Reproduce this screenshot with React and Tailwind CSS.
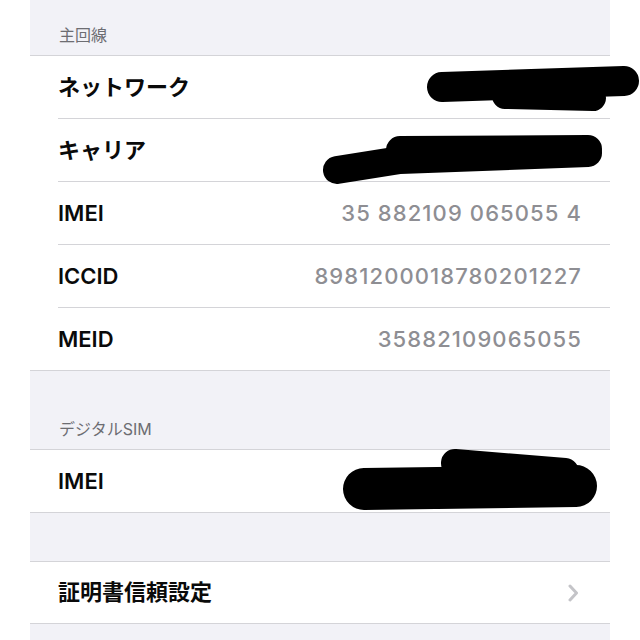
import React from "react";

const FONT = { fontFamily: 'Inter, "Noto Sans CJK JP", sans-serif' };

function Row({ label, value, last, chevron, h }) {
  return (
    <div className={"ml-[28px] pr-[29px] flex items-center justify-between " + (h || "h-[63px]") + " " + (last ? "" : "border-b border-[#d4d4d8]")}>
      <span className="text-[22px] font-semibold text-[#0a0a0a]">{label}</span>
      {value ? <span className="text-[22px] font-medium text-[#8e8e93] tracking-[1.1px] mr-[-1px]">{value}</span> : null}
      {chevron ? (
        <svg width="12" height="18" viewBox="0 0 12 18" className="mr-[2px]">
          <path d="M3 2 L9.5 9 L3 16" fill="none" stroke="#c4c4c8" strokeWidth="3" strokeLinecap="round" strokeLinejoin="round" />
        </svg>
      ) : null}
    </div>
  );
}

export default function App() {
  return (
    <div className="relative w-[640px] h-[640px] bg-white flex justify-center overflow-hidden" style={FONT}>
      <div className="w-[580px] h-full bg-[#f2f2f7]">
        <div className="h-[55px] flex items-end pb-[8px] pl-[29px] text-[16px] text-[#6d6d72]">主回線</div>
        <div className="bg-white border-t border-b border-[#d4d4d8]">
          <Row label="ネットワーク" />
          <Row label="キャリア" />
          <Row label="IMEI" value="35 882109 065055 4" />
          <Row label="ICCID" value="8981200018780201227" />
          <Row label="MEID" value="35882109065055" last h="h-[62px]" />
        </div>
        <div className="h-[78px] flex items-end pb-[8px] pl-[29px] text-[16px] text-[#6d6d72]">デジタルSIM</div>
        <div className="bg-white border-t border-b border-[#d4d4d8]">
          <Row label="IMEI" last h="h-[62px]" />
        </div>
        <div className="h-[48px]"></div>
        <div className="bg-white border-t border-b border-[#d4d4d8]">
          <Row label="証明書信頼設定" chevron last h="h-[61px]" />
        </div>
      </div>
      <svg className="absolute left-0 top-0 pointer-events-none" width="640" height="640" viewBox="0 0 640 640">
        <g stroke="#000" strokeLinecap="round" strokeLinejoin="round" fill="none">
          <path d="M442 87 L624 81" strokeWidth="30" />
          <path d="M505 96 L593 98" strokeWidth="26" />
          <path d="M337 170 L400 160 L588 153" strokeWidth="28" />
          <path d="M400 150 L588 149" strokeWidth="28" />
          <path d="M364 489 L576 486" strokeWidth="42" />
          <path d="M455 463 L565 472" strokeWidth="28" />
        </g>
      </svg>
    </div>
  );
}
